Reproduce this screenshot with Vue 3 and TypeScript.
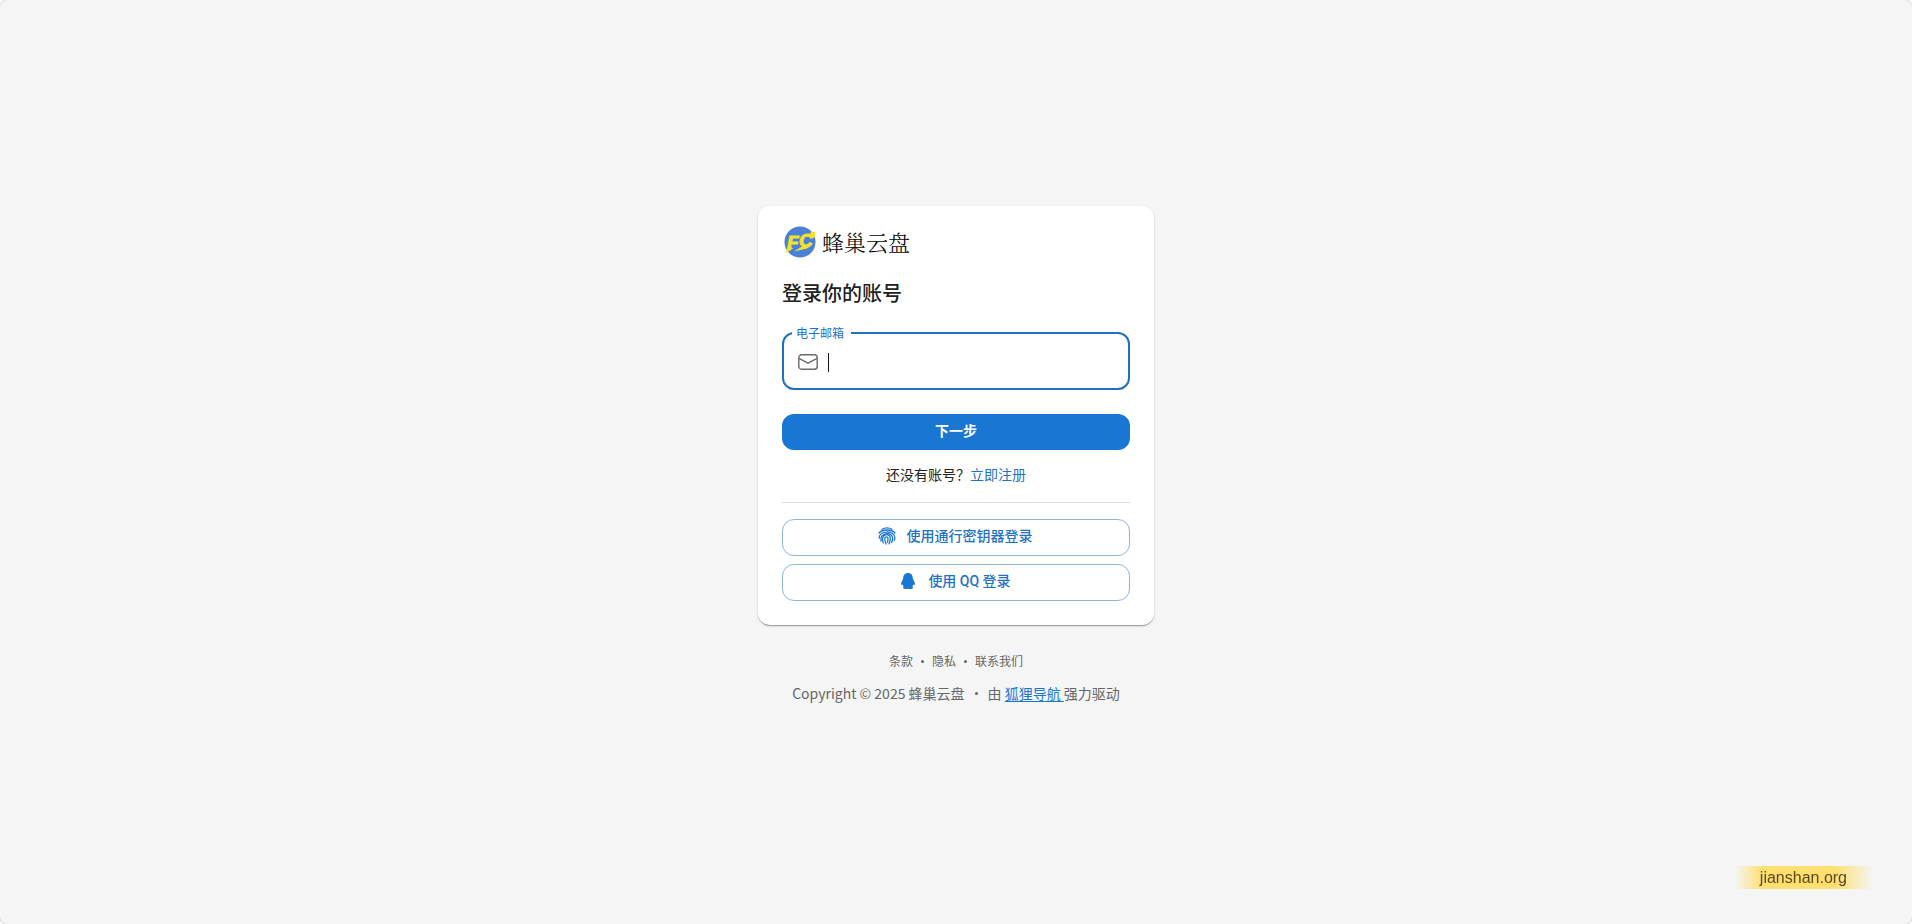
<script setup lang="ts">
import { ref } from 'vue'

const email = ref('')
const footerLinks = ['条款', '隐私', '联系我们']
</script>

<template>
  <div class="page">
    <main class="login">
      <section class="card">
        <header class="brand">
          <svg class="brand-mark" viewBox="0 0 32 32" aria-hidden="true">
            <circle cx="16" cy="16" r="15.5" fill="#4a80d6" />
            <path d="M5 19 L1.5 27.5 L9 22.5 Z" fill="#f2e22e" />
            <path d="M10 25.5 L17 21 L28 18 L23 22.5 Z" fill="#f2e22e" />
            <path d="M26 6.5 L31.5 5.5 L31 11 L28 11.5 Z" fill="#f2e22e" />
            <text x="3" y="23" class="mark-text">F</text>
            <text x="15" y="21" class="mark-text">C</text>
          </svg>
          <span class="brand-name">蜂巢云盘</span>
        </header>

        <h1 class="title">登录你的账号</h1>

        <form @submit.prevent>
          <fieldset class="field">
            <legend><label for="email">电子邮箱</label></legend>
            <div class="field-row">
              <svg class="mail" viewBox="0 0 20 16" fill="none" stroke="#6b6b6b" stroke-width="1.4" stroke-linejoin="round" aria-hidden="true">
                <rect x="0.8" y="0.8" width="18.4" height="14.4" rx="2.8" />
                <path d="M1 4.4 L10 9.2 L19 4.4" />
              </svg>
              <span class="caret"></span>
              <input id="email" v-model="email" type="email" autocomplete="username" />
            </div>
          </fieldset>
          <button class="button primary" type="submit">下一步</button>
        </form>

        <p class="signup">还没有账号？<a href="#">立即注册</a></p>
        <hr />

        <div class="alternatives">
          <button class="button outlined" type="button">
            <svg class="icon" viewBox="0 0 18 18" fill="none" stroke="currentColor" stroke-width="1.3" stroke-linecap="round" aria-hidden="true">
              <path d="M4 2.2 C7 0.5 11 0.5 14 2.2" />
              <path d="M1 6 C4.4 2 13.6 2 17 6" />
              <path d="M1.2 11.2 C0.6 3 17.4 3 16.9 11 C16.8 12 16.6 12.8 16.2 13.4" />
              <path d="M3 14.2 C1 5 14.8 4.6 14.6 11.2 C14.6 12.8 14.2 14.2 13.6 15.4" />
              <path d="M5.3 16 C3.6 12.6 4.4 8 8.4 7.6 C11 7.5 12.4 9 12.3 11.6 C12.2 13.6 11.8 15.2 11 16.9" />
              <path d="M8 17 C7.4 15 6.6 13.4 6.8 11.6 C7.1 9.2 10.2 9.4 10 12 C9.9 13.4 9.7 14.4 9.4 15.2" />
            </svg>
            <span>使用通行密钥器登录</span>
          </button>
          <button class="button outlined" type="button">
            <svg class="icon" viewBox="0 0 18 18" fill="currentColor" aria-hidden="true">
              <path d="M9 1 C5.8 1 4.2 3.3 4.2 6.4 C4 7 3.6 7.3 3.6 8.1 C2.6 9.6 1.9 11.2 2.1 12.6 C2.3 13.4 3 13 3.6 12.6 C3.8 13.3 4.2 13.9 4.7 14.5 C4.1 14.9 3.9 15.5 4.2 16.2 C4.8 17.1 7.7 17 9 16.7 C10.3 17 13.2 17.1 13.8 16.2 C14.1 15.5 13.9 14.9 13.3 14.5 C13.8 13.9 14.2 13.3 14.4 12.6 C15 13 15.7 13.4 15.9 12.6 C16.1 11.2 15.4 9.6 14.4 8.1 C14.4 7.3 14 7 13.8 6.4 C13.8 3.3 12.2 1 9 1 Z" />
            </svg>
            <span>使用 QQ 登录</span>
          </button>
        </div>
      </section>

      <footer class="footer">
        <nav>
          <template v-for="(link, i) in footerLinks" :key="link">
            <span v-if="i > 0" class="dot"></span>
            <a href="#">{{ link }}</a>
          </template>
        </nav>
        <p>
          <span>Copyright © 2025 蜂巢云盘</span>
          <span class="dot"></span>
          <span>由 <a href="#">狐狸导航&nbsp;</a>强力驱动</span>
        </p>
      </footer>
    </main>

    <div class="watermark">jianshan.org</div>
  </div>
</template>

<style>
body {
  background: #ffffff;
}
</style>

<style scoped>
.page {
  box-sizing: border-box;
  min-height: 100vh;
  display: flex;
  align-items: center;
  justify-content: center;
  background: #f5f5f5;
  border-radius: 8px;
  box-shadow: 0 0 0 1px #dddddd;
  font-family: "Noto Sans CJK SC", sans-serif;
  font-size: 14px;
  color: #212121;
}

.login {
  width: 100%;
  max-width: 396px;
  padding-bottom: 14px;
}

.card {
  padding: 20px 24px 24px;
  background: #ffffff;
  border-radius: 12px;
  box-shadow: 0 2px 1px -1px rgba(0, 0, 0, 0.2), 0 1px 1px rgba(0, 0, 0, 0.14), 0 1px 3px rgba(0, 0, 0, 0.12);
}

.brand {
  display: flex;
  align-items: center;
  gap: 6px;
  height: 32px;
  padding-left: 2px;
}

.brand-mark {
  width: 32px;
  height: 32px;
}

.mark-text {
  font: italic bold 19px "Liberation Sans", sans-serif;
  fill: #f2e22e;
  stroke: #f2e22e;
  stroke-width: 1;
}

.brand-name {
  font-family: "Noto Serif CJK SC", "Noto Sans CJK SC", serif;
  font-size: 22px;
  font-weight: 300;
  line-height: 32px;
  color: #000000;
}

.title {
  margin: 19px 0 15px;
  font-size: 20px;
  font-weight: 500;
  line-height: 32px;
}

.field {
  margin: 0 0 24px;
  padding: 0 12px;
  min-width: 0;
  border: 2px solid #1f71bd;
  border-radius: 12px;
}

.field legend {
  margin-left: -4px;
  padding: 0 7px 0 4px;
  font-size: 12px;
  line-height: 18px;
  color: #1f72c4;
}

.field-row {
  display: flex;
  align-items: center;
  height: 40px;
  padding-bottom: 6px;
}

.mail {
  flex: none;
  width: 20px;
  height: 16px;
  margin: 0 10px 0 2px;
}

.caret {
  width: 1px;
  height: 19px;
  background: #111111;
}

.field input {
  flex: 1;
  min-width: 0;
  padding: 0;
  border: 0;
  outline: 0;
  background: transparent;
  font: inherit;
  font-size: 16px;
}

.button {
  display: flex;
  align-items: center;
  justify-content: center;
  box-sizing: border-box;
  width: 100%;
  border-radius: 12px;
  font-family: Roboto, "Noto Sans CJK SC", sans-serif;
  font-size: 14px;
  font-weight: 500;
  line-height: 24px;
  cursor: pointer;
}

.primary {
  height: 36px;
  padding: 0 16px 2px;
  border: 0;
  background: #1976d2;
  color: #ffffff;
  font-weight: 700;
}

.outlined {
  height: 37px;
  gap: 11px;
  padding: 0 18px 3px 16px;
  border: 1px solid #8fb3d9;
  background: #ffffff;
  color: #1f72c4;
}

.icon {
  width: 18px;
  height: 18px;
  color: #1976d2;
}

.signup {
  margin: 13px 0 17px;
  line-height: 22px;
  text-align: center;
}

.signup a {
  color: #1f72c4;
  text-decoration: none;
}

hr {
  margin: 0 0 16px;
  border: 0;
  border-top: 1px solid #dddddd;
}

.alternatives {
  display: grid;
  gap: 8px;
}

.footer {
  padding-top: 27px;
  color: #666666;
}

.footer nav,
.footer p {
  display: flex;
  align-items: center;
  justify-content: center;
  margin: 0;
  white-space: nowrap;
}

.footer nav {
  gap: 8px;
  font-size: 12px;
  line-height: 18px;
}

.footer nav a {
  color: inherit;
  text-decoration: none;
}

.footer p {
  gap: 10px;
  margin-top: 12px;
  line-height: 22px;
}

.footer p a {
  color: #1976d2;
  text-underline-offset: 2px;
}

.dot {
  width: 3px;
  height: 3px;
  border-radius: 50%;
  background: #666666;
}

.watermark {
  position: fixed;
  right: 39px;
  bottom: 35px;
  padding: 0 26px 0 25px;
  background: linear-gradient(90deg, rgba(255, 221, 102, 0), #ffdf70 20%, #ffdf70 72%, rgba(255, 221, 102, 0));
  font-family: "Liberation Sans", Arial, sans-serif;
  font-size: 16px;
  line-height: 23px;
  color: #5c4a1c;
}
</style>
